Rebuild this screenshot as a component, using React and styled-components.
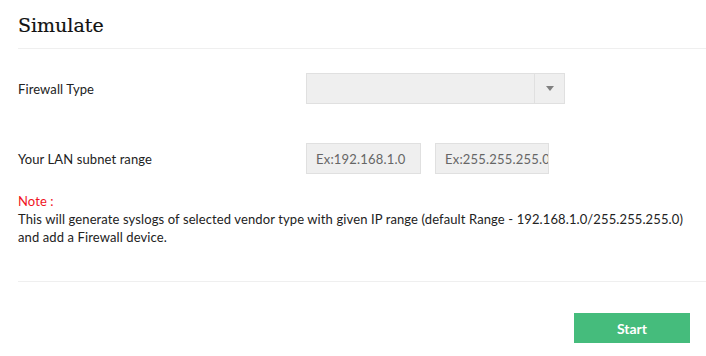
import styled, { createGlobalStyle } from 'styled-components';

const GlobalStyle = createGlobalStyle`
  body {
    margin: 0;
    background: #ffffff;
    font-family: Lato, "Open Sans", sans-serif;
    color: #222;
  }
`;

const Wrapper = styled.div`
  width: 706px;
  height: 356px;
  padding-left: 18px;
  box-sizing: border-box;
  background: #fff;
`;

const Header = styled.div`
  height: 49px;
  display: flex;
  align-items: center;
  border-bottom: 1px solid #efefef;
  box-sizing: border-box;
`;

const Title = styled.h2`
  margin: 0;
  padding-top: 1px;
  font-family: "DejaVu Serif", "Liberation Serif", serif;
  font-weight: normal;
  font-size: 19px;
  color: #111;
  -webkit-text-stroke: 0.2px #111;
`;

const Form = styled.div`
  display: flex;
  flex-direction: column;
  gap: 39px;
  padding-top: 24px;
`;

const Row = styled.div`
  display: grid;
  grid-template-columns: 288px auto;
  align-items: center;
  height: 31px;
`;

const Label = styled.label`
  font-size: 13px;
  letter-spacing: 0.1px;
  color: #222;
`;

const Select = styled.div`
  width: 259px;
  height: 31px;
  box-sizing: border-box;
  border: 1px solid #e0e0e0;
  background: #efefef;
  display: flex;
  justify-content: flex-end;
`;

const Caret = styled.div`
  width: 29px;
  border-left: 1px solid #e0e0e0;
  display: flex;
  align-items: center;
  justify-content: center;
  &::after {
    content: '';
    border-left: 4px solid transparent;
    border-right: 4px solid transparent;
    border-top: 5px solid #808080;
  }
`;

const Inputs = styled.div`
  display: flex;
  gap: 14px;
`;

const Input = styled.input`
  width: ${(p) => p.$w}px;
  height: 31px;
  box-sizing: border-box;
  border: 1px solid #e0e0e0;
  background: #efefef;
  padding: 0 0 0 9px;
  font-family: Lato, sans-serif;
  font-size: 13px;
  letter-spacing: 0.2px;
  outline: none;
  &::placeholder {
    color: #666;
  }
`;

const Note = styled.div`
  margin-top: 18px;
  font-size: 13px;
  line-height: 18px;
  letter-spacing: 0.11px;
  color: #222;
`;

const NoteTitle = styled.div`
  color: #f0141e;
`;

const Divider = styled.div`
  margin-top: 35px;
  height: 1px;
  background: #efefef;
`;

const Footer = styled.div`
  display: flex;
  justify-content: flex-end;
  padding: 31px 16px 0 0;
`;

const Button = styled.button`
  width: 116px;
  height: 30px;
  border: none;
  background: #45bc7c;
  color: #fff;
  font-family: Lato, sans-serif;
  font-weight: bold;
  font-size: 14px;
  cursor: pointer;
`;

function App() {
  return (
    <Wrapper>
      <GlobalStyle />
      <Header>
        <Title>Simulate</Title>
      </Header>
      <Form>
        <Row>
          <Label>Firewall Type</Label>
          <Select>
            <Caret />
          </Select>
        </Row>
        <Row>
          <Label>Your LAN subnet range</Label>
          <Inputs>
            <Input $w={115} placeholder="Ex:192.168.1.0" />
            <Input $w={114} placeholder="Ex:255.255.255.0" />
          </Inputs>
        </Row>
      </Form>
      <Note>
        <NoteTitle>Note :</NoteTitle>
        This will generate syslogs of selected vendor type with given IP range (default Range - 192.168.1.0/255.255.255.0)
        <br />
        and add a Firewall device.
      </Note>
      <Divider />
      <Footer>
        <Button>Start</Button>
      </Footer>
    </Wrapper>
  );
}

export default App;
